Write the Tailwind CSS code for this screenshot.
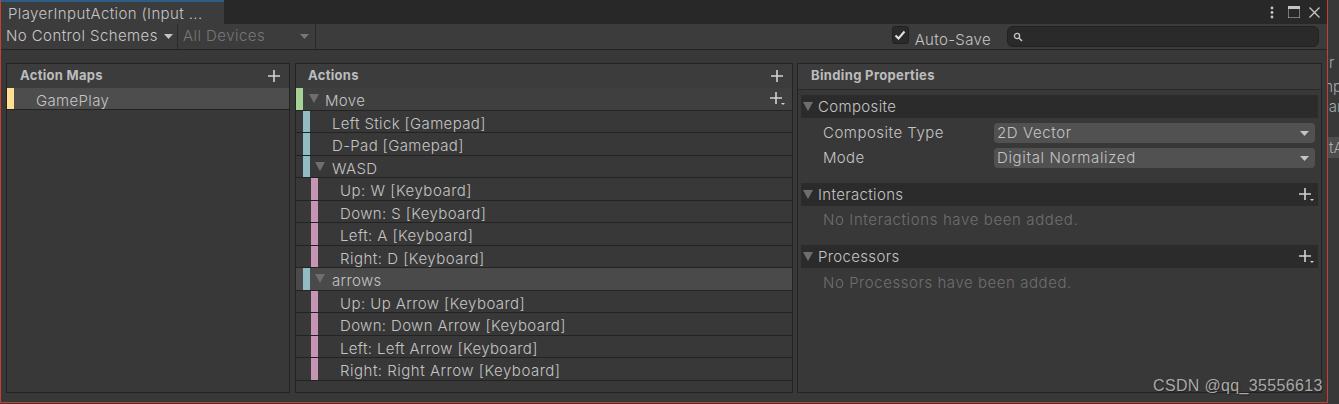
<!DOCTYPE html>
<html lang="en">
<head>
    <meta charset="UTF-8">
    <title>PlayerInputAction</title>
    <script src="https://cdn.jsdelivr.net/npm/@tailwindcss/browser@4"></script>
</head>
<body class="bg-[#383838] h-[404px] w-[1339px] overflow-hidden font-['Inter','Liberation_Sans',sans-serif] text-[15px] font-[350] text-[#c4c4c4]">
<div class="relative flex h-[404px] w-[1339px]">
    <!-- Window with red outline -->
    <div class="flex flex-col w-[1328px] h-[403px] border-l border-r border-b border-[#c8402f] bg-[#383838]">
        <!-- Tab bar -->
        <div class="flex h-[24px] bg-[#282828]">
            <div class="w-[223px] h-[24px] bg-[#3c3c3c] border-t-2 border-[#2c5d87] pl-[7px] leading-[24px] tracking-[0.38px] whitespace-nowrap">PlayerInputAction (Input ...</div>
            <div class="flex-1 flex items-center justify-end gap-[9px] pr-[7px]">
                <svg width="4" height="13" viewBox="0 0 4 13"><circle cx="2" cy="2" r="1.4" fill="#c4c4c4"/><circle cx="2" cy="6.5" r="1.4" fill="#c4c4c4"/><circle cx="2" cy="11" r="1.4" fill="#c4c4c4"/></svg>
                <svg class="ml-[5px]" width="12" height="12" viewBox="0 0 12 12"><path d="M0 0H12V12H0Z" fill="none" stroke="#c4c4c4" stroke-width="1"/><rect width="12" height="3" fill="#c4c4c4"/></svg>
                <svg width="11" height="11" viewBox="0 0 11 11"><path d="M0.5 0.5L10.5 10.5M10.5 0.5L0.5 10.5" stroke="#c4c4c4" stroke-width="1.4"/></svg>
            </div>
        </div>
        <!-- Toolbar -->
        <div class="flex items-center h-[26px] bg-[#3c3c3c] border-b border-[#232323]">
            <div class="flex items-center w-[177px] h-full pl-[5px] border-r border-[#2a2a2a] whitespace-nowrap tracking-[0.42px] text-[#c8c8c8]">No Control Schemes
                <svg class="ml-[6px]" width="9" height="5" viewBox="0 0 9 5"><path d="M0 0H9L4.5 5Z" fill="#c4c4c4"/></svg>
            </div>
            <div class="flex items-center justify-between w-[138px] h-full pl-[5px] pr-[6px] border-r border-[#2a2a2a] tracking-[0.45px] text-[#777]">All Devices
                <svg width="9" height="5" viewBox="0 0 9 5"><path d="M0 0H9L4.5 5Z" fill="#777"/></svg>
            </div>
            <div class="flex-1"></div>
            <div class="w-[17px] h-[18px] mb-[4px] rounded-[3px] bg-[#2a2a2a] border border-[#212121] flex items-center justify-center">
                <svg width="12" height="10" viewBox="0 0 12 10"><path d="M1.5 5.5L4.5 8.5L10.5 1.5" fill="none" stroke="#e2e2e2" stroke-width="2"/></svg>
            </div>
            <div class="ml-[6px] mt-[8px] tracking-[0.35px] whitespace-nowrap">Auto-Save</div>
            <div class="ml-[16px] mr-[8px] w-[312px] h-[21px] rounded-[6px] bg-[#2a2a2a] border border-[#212121] flex items-center pl-[5px]">
                <svg width="10" height="10" viewBox="0 0 10 10"><circle cx="4" cy="4" r="2.6" fill="none" stroke="#c4c4c4" stroke-width="1.3"/><path d="M6 6L9 9" stroke="#c4c4c4" stroke-width="1.6"/></svg>
            </div>
        </div>
        <!-- Panels -->
        <div class="flex flex-1 gap-[5px] pt-[13px] pl-[5px] pr-[5px] pb-[9px] min-h-0">
            <!-- Action Maps -->
            <section class="w-[284px] border border-[#232323] bg-[#383838] flex flex-col">
                <div class="flex items-center justify-between h-[24px] shrink-0 pl-[13px] pr-[9px] bg-[#3c3c3c] text-[13px] font-bold tracking-[0.3px] text-[#bcbcbc]">Action Maps
                    <svg width="12" height="12" viewBox="0 0 12 12"><path d="M6 0V12M0 6H12" stroke="#d2d2d2" stroke-width="1.6"/></svg>
                </div>
                <div class="flex h-[22px] bg-[#4d4d4d] border-b border-[#232323]">
                    <div class="w-[7px] bg-[#ffe08f]"></div>
                    <div class="pl-[22px] pt-[2px] leading-[21px] tracking-[0.35px]">GamePlay</div>
                </div>
            </section>
            <!-- Actions -->
            <section class="w-[498px] border border-[#232323] bg-[#383838] flex flex-col">
                <div class="flex items-center justify-between h-[24px] shrink-0 pl-[12px] pr-[9px] bg-[#3c3c3c] text-[13px] font-bold tracking-[0.3px] text-[#bcbcbc]">Actions
                    <svg width="12" height="12" viewBox="0 0 12 12"><path d="M6 0V12M0 6H12" stroke="#d2d2d2" stroke-width="1.6"/></svg>
                </div>
                <div class="flex h-[22.5px] items-center bg-[#3f3f3f] border-b border-[#232323]">
                    <div class="w-[7px] h-full bg-[#a5d395]"></div>
                    <svg class="ml-[6px]" width="10" height="9" viewBox="0 0 10 9"><path d="M0 0H10L5 9Z" fill="#6e6e6e"/></svg>
                    <div class="ml-[6px] pt-[5px] tracking-[0.35px]">Move</div>
                    <svg class="ml-auto mr-[7px]" width="15" height="14" viewBox="0 0 15 14"><path d="M6 0V12M0 6H12" stroke="#d2d2d2" stroke-width="1.6"/><path d="M11 11H15L13 13Z" fill="#d2d2d2"/></svg>
                </div>
                <div class="flex h-[22.5px] items-center border-b border-[#232323]"><div class="ml-[7px] w-[7px] h-full bg-[#90bcc2]"></div><div class="ml-[22px] pt-[5px] tracking-[0.35px]">Left Stick [Gamepad]</div></div>
                <div class="flex h-[22.5px] items-center border-b border-[#232323]"><div class="ml-[7px] w-[7px] h-full bg-[#90bcc2]"></div><div class="ml-[22px] pt-[5px] tracking-[0.35px]">D-Pad [Gamepad]</div></div>
                <div class="flex h-[22.5px] items-center border-b border-[#232323]">
                    <div class="ml-[7px] w-[7px] h-full bg-[#90bcc2]"></div>
                    <svg class="ml-[5px]" width="10" height="9" viewBox="0 0 10 9"><path d="M0 0H10L5 9Z" fill="#6e6e6e"/></svg>
                    <div class="ml-[7px] pt-[5px] tracking-[0.35px]">WASD</div>
                </div>
                <div class="flex h-[22.5px] items-center border-b border-[#232323]"><div class="ml-[15px] w-[7px] h-full bg-[#c595b3]"></div><div class="ml-[22px] pt-[5px] tracking-[0.5px]">Up: W [Keyboard]</div></div>
                <div class="flex h-[22.5px] items-center border-b border-[#232323]"><div class="ml-[15px] w-[7px] h-full bg-[#c595b3]"></div><div class="ml-[22px] pt-[5px] tracking-[0.38px]">Down: S [Keyboard]</div></div>
                <div class="flex h-[22.5px] items-center border-b border-[#232323]"><div class="ml-[15px] w-[7px] h-full bg-[#c595b3]"></div><div class="ml-[22px] pt-[5px] tracking-[0.4px]">Left: A [Keyboard]</div></div>
                <div class="flex h-[22.5px] items-center border-b border-[#232323]"><div class="ml-[15px] w-[7px] h-full bg-[#c595b3]"></div><div class="ml-[22px] pt-[5px] tracking-[0.48px]">Right: D [Keyboard]</div></div>
                <div class="flex h-[22.5px] items-center bg-[#4a4a4a] border-b border-[#232323]">
                    <div class="ml-[7px] w-[7px] h-full bg-[#90bcc2]"></div>
                    <svg class="ml-[5px]" width="10" height="9" viewBox="0 0 10 9"><path d="M0 0H10L5 9Z" fill="#6e6e6e"/></svg>
                    <div class="ml-[7px] pt-[5px] tracking-[0.35px]">arrows</div>
                </div>
                <div class="flex h-[22.5px] items-center border-b border-[#232323]"><div class="ml-[15px] w-[7px] h-full bg-[#c595b3]"></div><div class="ml-[22px] pt-[5px] tracking-[0.42px]">Up: Up Arrow [Keyboard]</div></div>
                <div class="flex h-[22.5px] items-center border-b border-[#232323]"><div class="ml-[15px] w-[7px] h-full bg-[#c595b3]"></div><div class="ml-[22px] pt-[5px] tracking-[0.35px]">Down: Down Arrow [Keyboard]</div></div>
                <div class="flex h-[22.5px] items-center border-b border-[#232323]"><div class="ml-[15px] w-[7px] h-full bg-[#c595b3]"></div><div class="ml-[22px] pt-[5px] tracking-[0.35px]">Left: Left Arrow [Keyboard]</div></div>
                <div class="flex h-[22.5px] items-center border-b border-[#232323]"><div class="ml-[15px] w-[7px] h-full bg-[#c595b3]"></div><div class="ml-[22px] pt-[5px] tracking-[0.5px]">Right: Right Arrow [Keyboard]</div></div>
            </section>
            <!-- Binding Properties -->
            <section class="flex-1 -ml-[1px] border border-[#232323] bg-[#383838] flex flex-col">
                <div class="flex items-center h-[26px] shrink-0 pl-[13px] pb-[2px] bg-[#3c3c3c] border-b border-[#2a2a2a] text-[13px] font-bold tracking-[0.35px] text-[#bcbcbc]">Binding Properties</div>
                <div class="pt-[5px] pl-[3px] pr-[3px]">
                    <div class="flex items-center h-[23px] bg-[#2b2b2b]">
                        <svg class="ml-[2px]" width="10" height="9" viewBox="0 0 10 9"><path d="M0 0H10L5 9Z" fill="#6e6e6e"/></svg>
                        <div class="ml-[5px] pt-[2px] tracking-[0.35px]">Composite</div>
                    </div>
                    <div class="flex items-center h-[20px] mt-[5px] pl-[22px] pr-[3px]">
                        <div class="w-[171px] tracking-[0.5px]">Composite Type</div>
                        <div class="flex-1 flex items-center justify-between h-[20px] rounded-[4px] bg-[#515151] pl-[3px] pr-[6px] tracking-[0.6px]">2D Vector
                            <svg width="9" height="5" viewBox="0 0 9 5"><path d="M0 0H9L4.5 5Z" fill="#c4c4c4"/></svg>
                        </div>
                    </div>
                    <div class="flex items-center h-[20px] mt-[5px] pl-[22px] pr-[3px]">
                        <div class="w-[171px] tracking-[0.35px]">Mode</div>
                        <div class="flex-1 flex items-center justify-between h-[20px] rounded-[4px] bg-[#515151] pl-[3px] pr-[6px] tracking-[0.65px]">Digital Normalized
                            <svg width="9" height="5" viewBox="0 0 9 5"><path d="M0 0H9L4.5 5Z" fill="#c4c4c4"/></svg>
                        </div>
                    </div>
                    <div class="flex items-center h-[23px] mt-[15px] bg-[#2b2b2b]">
                        <svg class="ml-[2px]" width="10" height="9" viewBox="0 0 10 9"><path d="M0 0H10L5 9Z" fill="#6e6e6e"/></svg>
                        <div class="ml-[5px] pt-[2px] tracking-[0.35px]">Interactions</div>
                        <svg class="ml-auto mr-[4px]" width="15" height="14" viewBox="0 0 15 14"><path d="M6 0V12M0 6H12" stroke="#d2d2d2" stroke-width="1.6"/><path d="M11 11H15L13 13Z" fill="#d2d2d2"/></svg>
                    </div>
                    <div class="h-[39px] pl-[22px] pt-[3px] leading-[22px] tracking-[0.62px] text-[#6f6f6f]">No Interactions have been added.</div>
                    <div class="flex items-center h-[23px] bg-[#2b2b2b]">
                        <svg class="ml-[2px]" width="10" height="9" viewBox="0 0 10 9"><path d="M0 0H10L5 9Z" fill="#6e6e6e"/></svg>
                        <div class="ml-[5px] pt-[2px] tracking-[0.35px]">Processors</div>
                        <svg class="ml-auto mr-[4px]" width="15" height="14" viewBox="0 0 15 14"><path d="M6 0V12M0 6H12" stroke="#d2d2d2" stroke-width="1.6"/><path d="M11 11H15L13 13Z" fill="#d2d2d2"/></svg>
                    </div>
                    <div class="pl-[22px] pt-[4px] leading-[22px] tracking-[0.55px] text-[#6f6f6f]">No Processors have been added.</div>
                </div>
            </section>
        </div>
    </div>
    <!-- Sliver of the inspector behind the window -->
    <div class="flex-1 overflow-hidden bg-[#383838] text-[#a8a8a8] whitespace-nowrap">
        <div class="h-[20px] mt-[53px] pl-[1px] leading-[20px]">r</div>
        <div class="h-[21px] mt-[3px] -ml-[8px] leading-[21px]">mp</div>
        <div class="h-[20px] -ml-[8px] leading-[20px]">ear</div>
        <div class="h-[21px] mt-[20px] -ml-[4px] pl-[5px] bg-[#4d4d4d] leading-[21px]">tA</div>
    </div>
    <!-- Watermark -->
    <div class="absolute left-[1153px] top-[376px] font-['Liberation_Sans',sans-serif] font-normal text-[16px] leading-[19px] tracking-[0.35px] text-[#a9a9a9] [text-shadow:1px_1px_1px_#222] whitespace-nowrap">CSDN @qq_35556613</div>
</div>
</body>
</html>
